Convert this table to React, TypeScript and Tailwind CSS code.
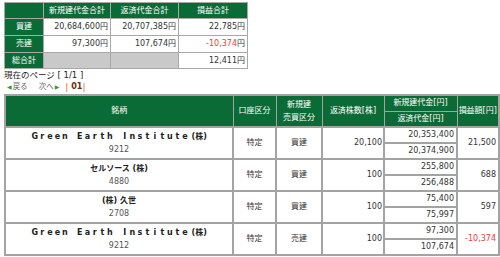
import React from "react";

const G = "bg-[#0b6b36] text-white font-normal";

const font = { fontFamily: '"DejaVu Sans", "Noto Sans CJK JP", sans-serif' };

function Spaced({ text }: { text: string }) {
  return (
    <span className="inline-flex">
      {text.split("").map((c, i) => (
        <span key={i} className="inline-block w-[7.5px] text-center">
          {c === " " ? "\u00a0" : c}
        </span>
      ))}
    </span>
  );
}

interface Row {
  name: React.ReactNode;
  code: string;
  kind: string;
  qty: string;
  open: string;
  close: string;
  pl: string;
  neg?: boolean;
}

const gei = (
  <>
    <Spaced text="Green Earth Institute" />
    <span className="ml-[3px]">(株)</span>
  </>
);

const rows: Row[] = [
  { name: gei, code: "9212", kind: "買建", qty: "20,100", open: "20,353,400", close: "20,374,900", pl: "21,500" },
  { name: "セルソース (株)", code: "4880", kind: "買建", qty: "100", open: "255,800", close: "256,488", pl: "688" },
  { name: "(株) 久世", code: "2708", kind: "買建", qty: "100", open: "75,400", close: "75,997", pl: "597" },
  { name: gei, code: "9212", kind: "売建", qty: "100", open: "97,300", close: "107,674", pl: "-10,374", neg: true },
];

export default function App() {
  const sumCell = "border border-[#a8a8a8] text-right pr-[2px] p-0 text-[#333]";
  const labelCell = "border border-[#a8a8a8] bg-[#0b6b36] text-white text-center p-0";
  const bd = "border-2 border-[#a3a3a3] p-0";
  const hb = "border border-[#a3a3a3] p-0";
  return (
    <div
      className="w-[500px] h-[257px] bg-white overflow-hidden text-[8px] leading-[12px] text-[#333] pl-[4px] pt-[2px]"
      style={font}
    >
      <table className="border-collapse w-[243px] table-fixed">
        <colgroup>
          <col className="w-[39px]" />
          <col className="w-[67px]" />
          <col className="w-[68px]" />
          <col className="w-[69px]" />
        </colgroup>
        <tbody>
          <tr className="h-[16px]">
            <td className={labelCell}></td>
            <td className={labelCell}>新規建代金合計</td>
            <td className={labelCell}>返済代金合計</td>
            <td className={labelCell}>損益合計</td>
          </tr>
          <tr className="h-[17px]">
            <td className={labelCell}>買建</td>
            <td className={sumCell}>20,684,600円</td>
            <td className={sumCell}>20,707,385円</td>
            <td className={sumCell}>22,785円</td>
          </tr>
          <tr className="h-[17px]">
            <td className={labelCell}>売建</td>
            <td className={sumCell}>97,300円</td>
            <td className={sumCell}>107,674円</td>
            <td className={sumCell}>
              <span className="text-[#e5433a]">-10,374</span>円
            </td>
          </tr>
          <tr className="h-[16px]">
            <td className={labelCell}>総合計</td>
            <td className={`${sumCell} bg-[#c9c9c9]`}></td>
            <td className={`${sumCell} bg-[#c9c9c9]`}></td>
            <td className={sumCell}>12,411円</td>
          </tr>
        </tbody>
      </table>

      <div className="text-[8.5px] leading-[12px] text-[#222]">現在のページ [ 1/1 ]</div>
      <div className="flex items-center h-[12px] text-[7.5px] pl-[3px] text-[#666]">
        <span className="text-[#3f9a2e] text-[6px] mr-[1px]">◀</span>
        <span>戻る</span>
        <span className="ml-[11px]">次へ</span>
        <span className="text-[#3f9a2e] text-[6px] ml-[1px]">▶</span>
        <span className="ml-[6px] text-[#e06b2a] text-[9px]">|</span>
        <span className="ml-[3px] font-bold text-[#6b2d10] text-[8px]">01</span>
        <span className="text-[#e06b2a] text-[9px]">|</span>
      </div>

      <table className={`border-collapse table-fixed w-[494px] mt-[1px] ${bd}`}>
        <colgroup>
          <col className="w-[228px]" />
          <col className="w-[43px]" />
          <col className="w-[46px]" />
          <col className="w-[62px]" />
          <col className="w-[73px]" />
          <col className="w-[42px]" />
        </colgroup>
        <thead>
          <tr className="h-[16px]">
            <th rowSpan={2} className={`${G} ${hb}`}>銘柄</th>
            <th rowSpan={2} className={`${G} ${hb}`}>口座区分</th>
            <th rowSpan={2} className={`${G} ${hb} leading-[13px]`}>
              新規建
              <br />
              売買区分
            </th>
            <th rowSpan={2} className={`${G} ${hb}`}>返済株数[株]</th>
            <th className={`${G} ${hb}`}>新規建代金[円]</th>
            <th rowSpan={2} className={`${G} ${hb}`}>損益額[円]</th>
          </tr>
          <tr className="h-[16px]">
            <th className={`${G} ${hb}`}>返済代金[円]</th>
          </tr>
        </thead>
        <tbody>
          {rows.map((r, i) => (
            <React.Fragment key={i}>
              <tr className="h-[16px]">
                <td rowSpan={2} className={`${bd} text-center leading-[13px]`}>
                  <div className="font-bold text-[#222]">{r.name}</div>
                  <div className="text-[#555]">{r.code}</div>
                </td>
                <td rowSpan={2} className={`${bd} text-center`}>特定</td>
                <td rowSpan={2} className={`${bd} text-center`}>{r.kind}</td>
                <td rowSpan={2} className={`${bd} text-right pr-[1px]`}>{r.qty}</td>
                <td className={`${bd} text-right pr-[2px]`}>{r.open}</td>
                <td rowSpan={2} className={`${bd} text-right pr-[2px] ${r.neg ? "text-[#e5433a]" : ""}`}>{r.pl}</td>
              </tr>
              <tr className="h-[16px]">
                <td className={`${bd} text-right pr-[2px]`}>{r.close}</td>
              </tr>
            </React.Fragment>
          ))}
        </tbody>
      </table>
    </div>
  );
}
